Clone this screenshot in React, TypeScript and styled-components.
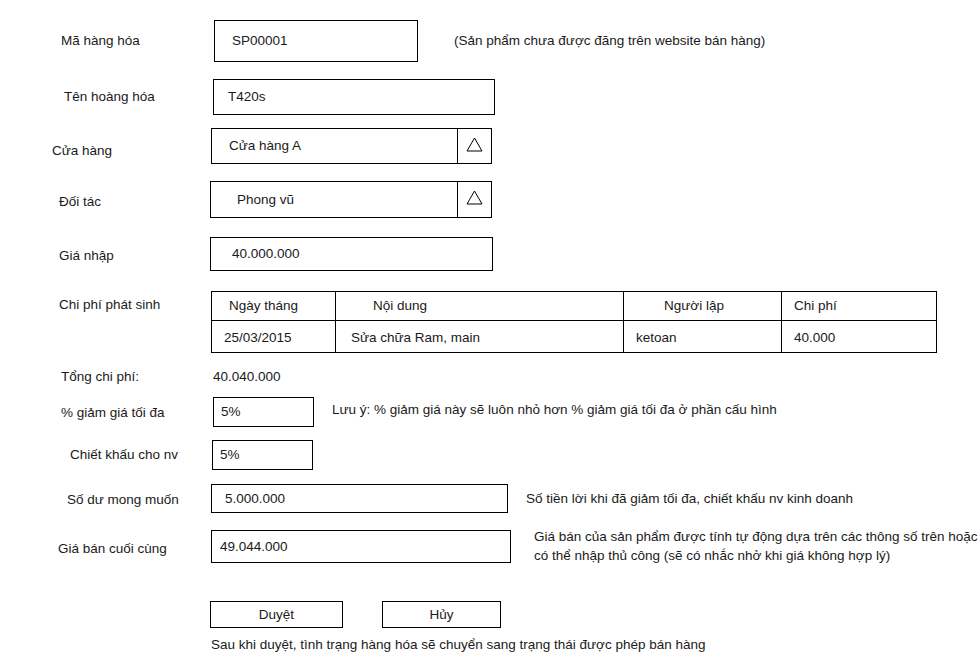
import React from "react";
import styled, { createGlobalStyle } from "styled-components";

const Global = createGlobalStyle`
  html, body { margin: 0; padding: 0; background: #fff; }
  body { overflow: hidden; }
`;

const Page = styled.div`
  width: 980px;
  height: 669px;
  overflow: hidden;
  font-family: "Liberation Sans", Arial, sans-serif;
  font-size: 13.5px;
  line-height: 16px;
  color: #1a1a1a;
  padding-top: 20px;
  box-sizing: border-box;
  white-space: nowrap;
`;

const Row = styled.div<{ $h: number; $mt?: number; $top?: boolean }>`
  display: flex;
  align-items: ${(p) => (p.$top ? "flex-start" : "center")};
  height: ${(p) => p.$h}px;
  margin-top: ${(p) => p.$mt ?? 0}px;
`;

const Label = styled.div<{ $x: number; $to: number; $dy?: number }>`
  flex: 0 0 auto;
  box-sizing: border-box;
  width: ${(p) => p.$to}px;
  padding-left: ${(p) => p.$x}px;
  margin-top: ${(p) => (p.$dy ?? 0) * 2}px;
`;

const Field = styled.div<{ $w: number; $pl: number }>`
  box-sizing: border-box;
  width: ${(p) => p.$w}px;
  height: 100%;
  border: 1px solid #000;
  padding-left: ${(p) => p.$pl}px;
  display: flex;
  align-items: center;
`;

const Select = styled.div<{ $w: number }>`
  box-sizing: border-box;
  width: ${(p) => p.$w}px;
  height: 100%;
  border: 1px solid #000;
  display: flex;
  align-items: stretch;
`;

const SelectValue = styled.div<{ $pl: number }>`
  flex: 1;
  padding-left: ${(p) => p.$pl}px;
  display: flex;
  align-items: center;
`;

const DropButton = styled.div`
  flex: 0 0 34px;
  border-left: 1px solid #000;
  display: flex;
  align-items: center;
  justify-content: center;
  padding-bottom: 4px;
  box-sizing: border-box;
`;

const Note = styled.div<{ $ml: number; $dy?: number; $lh?: number }>`
  margin-left: ${(p) => p.$ml}px;
  margin-top: ${(p) => (p.$dy ?? 0) * 2}px;
  line-height: ${(p) => p.$lh ?? 16}px;
`;

const Value = styled.div`
  flex: 0 0 auto;
`;

const Table = styled.table`
  border-collapse: collapse;
  width: 725px;
  table-layout: fixed;
`;

const Th = styled.td<{ $pl: number }>`
  border: 1px solid #000;
  height: 29px;
  padding: 0 0 0 ${(p) => p.$pl}px;
  font-weight: normal;
  text-align: left;
  vertical-align: middle;
  box-sizing: border-box;
`;

const Td = styled.td<{ $pl: number }>`
  border: 1px solid #000;
  height: 32px;
  padding: 2px 0 0 ${(p) => p.$pl}px;
  text-align: left;
  vertical-align: middle;
  box-sizing: border-box;
`;

const ButtonRow = styled.div`
  display: flex;
  margin-top: 38px;
  padding-left: 210px;
  gap: 39px;
  height: 27px;
`;

const Button = styled.button<{ $w: number }>`
  box-sizing: border-box;
  width: ${(p) => p.$w}px;
  height: 27px;
  border: 1px solid #000;
  background: #fff;
  font: inherit;
  color: inherit;
  padding: 0;
  cursor: pointer;
`;

const Footer = styled.div`
  margin-top: 9px;
  padding-left: 211px;
`;

const Triangle = () => (
  <svg width="17" height="15" viewBox="0 0 17 15">
    <polygon points="8.5,1 16,14 1,14" fill="none" stroke="#000" strokeWidth="1" />
  </svg>
);

export default function App() {
  return (
    <>
      <Global />
      <Page>
        <Row $h={42}>
          <Label $x={61} $to={214}>Mã hàng hóa</Label>
          <Field $w={204} $pl={17}>SP00001</Field>
          <Note $ml={36}>(Sản phẩm chưa được đăng trên website bán hàng)</Note>
        </Row>

        <Row $h={36} $mt={17}>
          <Label $x={64} $to={213}>Tên hoàng hóa</Label>
          <Field $w={282} $pl={14}>T420s</Field>
        </Row>

        <Row $h={36} $mt={13}>
          <Label $x={52} $to={211} $dy={5}>Cửa hàng</Label>
          <Select $w={281}>
            <SelectValue $pl={17}>Cửa hàng A</SelectValue>
            <DropButton>
              <Triangle />
            </DropButton>
          </Select>
        </Row>

        <Row $h={37} $mt={17}>
          <Label $x={59} $to={210} $dy={2.5}>Đối tác</Label>
          <Select $w={282}>
            <SelectValue $pl={26}>Phong vũ</SelectValue>
            <DropButton>
              <Triangle />
            </DropButton>
          </Select>
        </Row>

        <Row $h={34} $mt={19}>
          <Label $x={59} $to={210} $dy={1.5}>Giá nhập</Label>
          <Field $w={283} $pl={21}>40.000.000</Field>
        </Row>

        <Row $h={63} $mt={20} $top>
          <Label $x={59} $to={211} $dy={3}>Chi phí phát sinh</Label>
          <Table>
            <colgroup>
              <col style={{ width: 124 }} />
              <col style={{ width: 288 }} />
              <col style={{ width: 158 }} />
              <col style={{ width: 155 }} />
            </colgroup>
            <tbody>
              <tr>
                <Th $pl={17}>Ngày tháng</Th>
                <Th $pl={37}>Nội dung</Th>
                <Th $pl={40}>Người lập</Th>
                <Th $pl={12}>Chi phí</Th>
              </tr>
              <tr>
                <Td $pl={12}>25/03/2015</Td>
                <Td $pl={15}>Sửa chữa Ram, main</Td>
                <Td $pl={12}>ketoan</Td>
                <Td $pl={12}>40.000</Td>
              </tr>
            </tbody>
          </Table>
        </Row>

        <Row $h={16} $mt={15}>
          <Label $x={61} $to={213}>Tổng chi phí:</Label>
          <Value>40.040.000</Value>
        </Row>

        <Row $h={30} $mt={12}>
          <Label $x={61} $to={213} $dy={1}>% giảm giá tối đa</Label>
          <Field $w={101} $pl={7}>5%</Field>
          <Note $ml={18} $dy={-2}>Lưu ý: % giảm giá này sẽ luôn nhỏ hơn % giảm giá tối đa ở phần cấu hình</Note>
        </Row>

        <Row $h={30} $mt={13}>
          <Label $x={70} $to={212}>Chiết khấu cho nv</Label>
          <Field $w={101} $pl={7}>5%</Field>
        </Row>

        <Row $h={29} $mt={14}>
          <Label $x={67} $to={211} $dy={1.5}>Số dư mong muốn</Label>
          <Field $w={297} $pl={13}>5.000.000</Field>
          <Note $ml={18}>Số tiền lời khi đã giảm tối đa, chiết khấu nv kinh doanh</Note>
        </Row>

        <Row $h={33} $mt={17}>
          <Label $x={58} $to={211} $dy={2}>Giá bán cuối cùng</Label>
          <Field $w={300} $pl={8}>49.044.000</Field>
          <Note $ml={23} $lh={18.5}>
            Giá bán của sản phẩm được tính tự động dựa trên các thông số trên hoặc
            <br />
            có thể nhập thủ công (sẽ có nhắc nhở khi giá không hợp lý)
          </Note>
        </Row>

        <ButtonRow>
          <Button $w={133}>Duyệt</Button>
          <Button $w={119}>Hủy</Button>
        </ButtonRow>

        <Footer>Sau khi duyệt, tình trạng hàng hóa sẽ chuyển sang trạng thái được phép bán hàng</Footer>
      </Page>
    </>
  );
}
